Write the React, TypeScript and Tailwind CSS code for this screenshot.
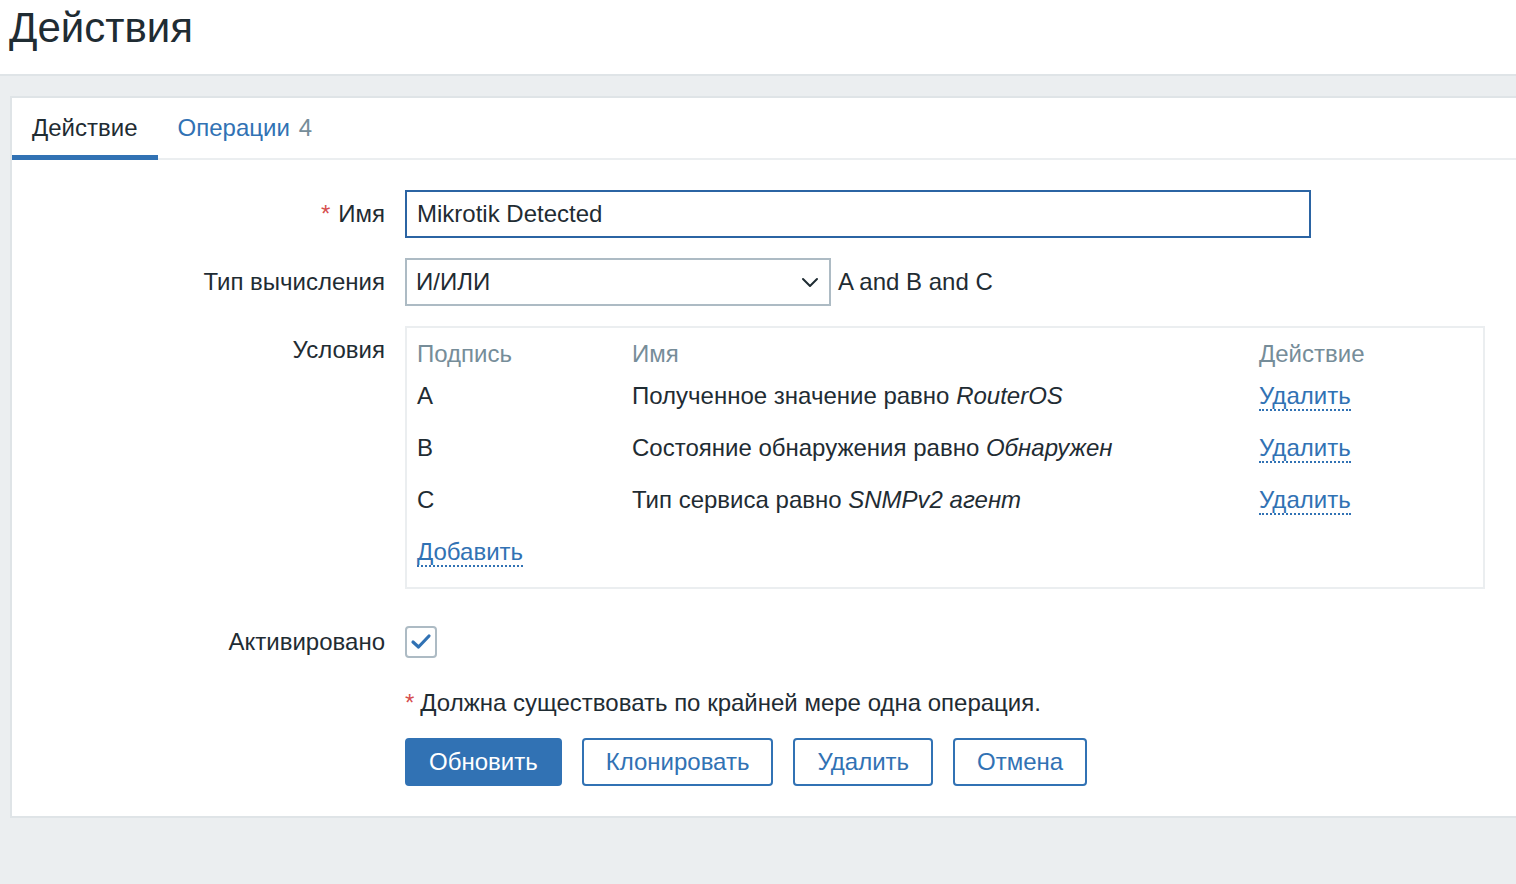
import React from "react";

const rows = [
  { label: "A", text: "Полученное значение равно ", em: "RouterOS" },
  { label: "B", text: "Состояние обнаружения равно ", em: "Обнаружен" },
  { label: "C", text: "Тип сервиса равно ", em: "SNMPv2 агент" },
];

function Row({ label, children, labelClass = "h-[48px] items-center", className = "" }: { label?: React.ReactNode; children: React.ReactNode; labelClass?: string; className?: string }) {
  return (
    <div className={`flex gap-[20px] ${className}`}>
      <div className={`w-[373px] shrink-0 flex justify-end text-[24px] leading-[26px] ${labelClass}`}>{label}</div>
      <div className="flex items-center">{children}</div>
    </div>
  );
}

export default function App() {
  return (
    <div className="h-[884px] w-full overflow-hidden bg-[#ebeef0] font-['Liberation_Sans',Arial,sans-serif] text-[#1f2c33]">
      <header className="h-[76px] bg-white border-b-2 border-[#dfe4e7] pl-[9px] pt-[4px]">
        <h1 className="text-[42px] leading-[48px] font-normal">Действия</h1>
      </header>

      <div className="mt-[20px] ml-[10px] w-[1560px] bg-white border-2 border-[#dfe4e7] pb-[30px]">
        {/* tabs */}
        <div className="flex border-b-2 border-[#ebeef0]">
          <div className="h-[62px] -mb-[2px] px-[20px] pt-[3px] flex items-center border-b-[5px] border-[#3172b4] text-[24px]">
            Действие
          </div>
          <div className="h-[62px] -mb-[2px] px-[20px] pt-[3px] flex items-center border-b-[5px] border-transparent text-[24px]">
            <span className="text-[#3172b4]">Операции</span>
            <span className="ml-[9px] text-[#768d99]">4</span>
          </div>
        </div>

        {/* form */}
        <Row
          className="mt-[30px]"
          label={
            <>
              <span className="text-[#d64e4e] mr-[8px]">*</span>
              <span>Имя</span>
            </>
          }
        >
          <div className="w-[906px] h-[48px] border-2 border-[#2b64a3] pl-[10px] flex items-center text-[24px]">
            Mikrotik Detected
          </div>
        </Row>

        <Row className="mt-[20px]" label="Тип вычисления">
          <div className="w-[426px] h-[48px] border-2 border-[#adbbc4] pl-[9px] pr-[9px] flex items-center justify-between text-[24px]">
            <span>И/ИЛИ</span>
            <svg width="18" height="12" viewBox="0 0 18 12" className="mr-[1px]">
              <polyline points="2,3 9,10 16,3" fill="none" stroke="#1f2c33" strokeWidth="2" strokeLinecap="round" strokeLinejoin="round" />
            </svg>
          </div>
          <span className="ml-[7px] text-[24px]">A and B and C</span>
        </Row>

        <Row className="mt-[20px]" label="Условия" labelClass="pt-[11px]">
          <div className="w-[1080px] border-2 border-[#ebeef0] pt-[13px] pl-[10px] pb-[22px] text-[24px] leading-[26px]">
            <div className="flex text-[#768d99]">
              <div className="w-[215px]">Подпись</div>
              <div className="w-[627px]">Имя</div>
              <div>Действие</div>
            </div>
            <div className="mt-[16px] flex flex-col gap-[26px]">
              {rows.map((r) => (
                <div key={r.label} className="flex">
                  <div className="w-[215px]">{r.label}</div>
                  <div className="w-[627px]">
                    {r.text}
                    <i>{r.em}</i>
                  </div>
                  <div>
                    <span className="text-[#3172b4] border-b-2 border-dotted border-[#3172b4]">Удалить</span>
                  </div>
                </div>
              ))}
              <div>
                <span className="text-[#3172b4] border-b-2 border-dotted border-[#3172b4]">Добавить</span>
              </div>
            </div>
          </div>
        </Row>

        <Row className="mt-[37px]" label="Активировано" labelClass="h-[32px] items-center">
          <div className="w-[32px] h-[32px] border-2 border-[#adbbc4] rounded-[4px] flex items-center justify-center">
            <svg width="22" height="18" viewBox="0 0 22 18">
              <polyline points="3,9 8.5,14 19,3" fill="none" stroke="#3172b4" strokeWidth="3.2" strokeLinecap="round" strokeLinejoin="round" />
            </svg>
          </div>
        </Row>

        <Row className="mt-[32px]" labelClass="">
          <div className="text-[24px] leading-[26px]">
            <span className="text-[#d64e4e] mr-[6px]">*</span>
            Должна существовать по крайней мере одна операция.
          </div>
        </Row>

        <Row className="mt-[22px]" labelClass="">
          <div className="flex gap-[20px] text-[24px]">
            <button className="h-[48px] px-[22px] bg-[#3172b4] border-2 border-[#3172b4] rounded-[4px] text-white">Обновить</button>
            <button className="h-[48px] px-[22px] bg-white border-2 border-[#3172b4] rounded-[4px] text-[#3172b4]">Клонировать</button>
            <button className="h-[48px] px-[22px] bg-white border-2 border-[#3172b4] rounded-[4px] text-[#3172b4]">Удалить</button>
            <button className="h-[48px] px-[22px] bg-white border-2 border-[#3172b4] rounded-[4px] text-[#3172b4]">Отмена</button>
          </div>
        </Row>
      </div>
    </div>
  );
}
